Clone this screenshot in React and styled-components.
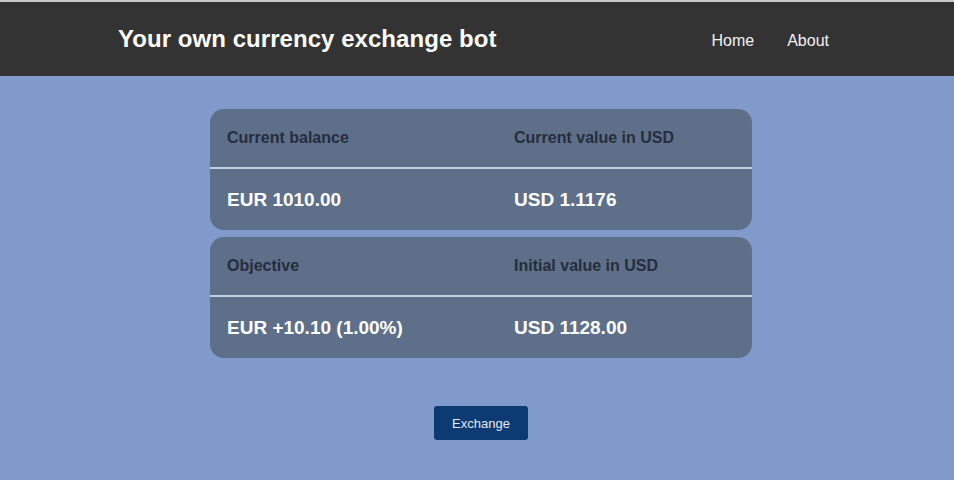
import React from 'react';
import styled, { createGlobalStyle } from 'styled-components';

const GlobalStyle = createGlobalStyle`
    html, body {
        margin: 0;
        padding: 0;
        background-color: #7f9acb;
        font-family: "Liberation Sans", Arial, sans-serif;
    }
`;

const Page = styled.div`
    min-height: 480px;
    border-top: 2px solid #c9c9c9;
    box-sizing: border-box;
`;

const NavBar = styled.header`
    display: flex;
    align-items: center;
    justify-content: space-between;
    height: 74px;
    padding: 0 125px 0 118px;
    background-color: #333333;
`;

const Brand = styled.h1`
    margin: 0;
    color: #ffffff;
    font-size: 24px;
    font-weight: bold;
    letter-spacing: 0.05px;
`;

const NavLinks = styled.nav`
    display: flex;
    gap: 33px;
    padding-top: 3px;
`;

const NavLink = styled.a`
    color: #f2f2f2;
    font-size: 16px;
    text-decoration: none;
    cursor: pointer;
`;

const Main = styled.main`
    display: flex;
    flex-direction: column;
    align-items: center;
    padding: 33px 0 0 8px;
`;

const Cards = styled.div`
    display: flex;
    flex-direction: column;
    gap: 7px;
    width: 542px;
`;

const Card = styled.section`
    background-color: #5e6f8a;
    border-radius: 14px;
    overflow: hidden;
`;

const Row = styled.div`
    display: grid;
    grid-template-columns: 287px 1fr;
    align-items: center;
    height: ${(p) => (p.head ? '58px' : '61px')};
    padding: 0 17px;
    border-bottom: ${(p) => (p.head ? '2px solid #c3d0e4' : 'none')};
`;

const Label = styled.span`
    color: #262d3b;
    font-size: 16px;
    font-weight: bold;
`;

const Value = styled.span`
    color: #ffffff;
    font-size: 19px;
    font-weight: bold;
`;

const ExchangeButton = styled.button`
    margin-top: 48px;
    width: 94px;
    height: 34px;
    border: none;
    border-radius: 3px;
    background-color: #0c3a72;
    color: #e3e9f5;
    font-family: "Liberation Sans", Arial, sans-serif;
    font-size: 13px;
    cursor: pointer;
`;

const INFO = [
    {
        labels: ['Current balance', 'Current value in USD'],
        values: ['EUR 1010.00', 'USD 1.1176'],
    },
    {
        labels: ['Objective', 'Initial value in USD'],
        values: ['EUR +10.10 (1.00%)', 'USD 1128.00'],
    },
];

const App = () => (
    <Page>
        <GlobalStyle />
        <NavBar>
            <Brand>Your own currency exchange bot</Brand>
            <NavLinks>
                <NavLink>Home</NavLink>
                <NavLink>About</NavLink>
            </NavLinks>
        </NavBar>
        <Main>
            <Cards>
                {INFO.map((card) => (
                    <Card key={card.labels[0]}>
                        <Row head>
                            {card.labels.map((l) => <Label key={l}>{l}</Label>)}
                        </Row>
                        <Row>
                            {card.values.map((v) => <Value key={v}>{v}</Value>)}
                        </Row>
                    </Card>
                ))}
            </Cards>
            <ExchangeButton>Exchange</ExchangeButton>
        </Main>
    </Page>
);

export default App;
